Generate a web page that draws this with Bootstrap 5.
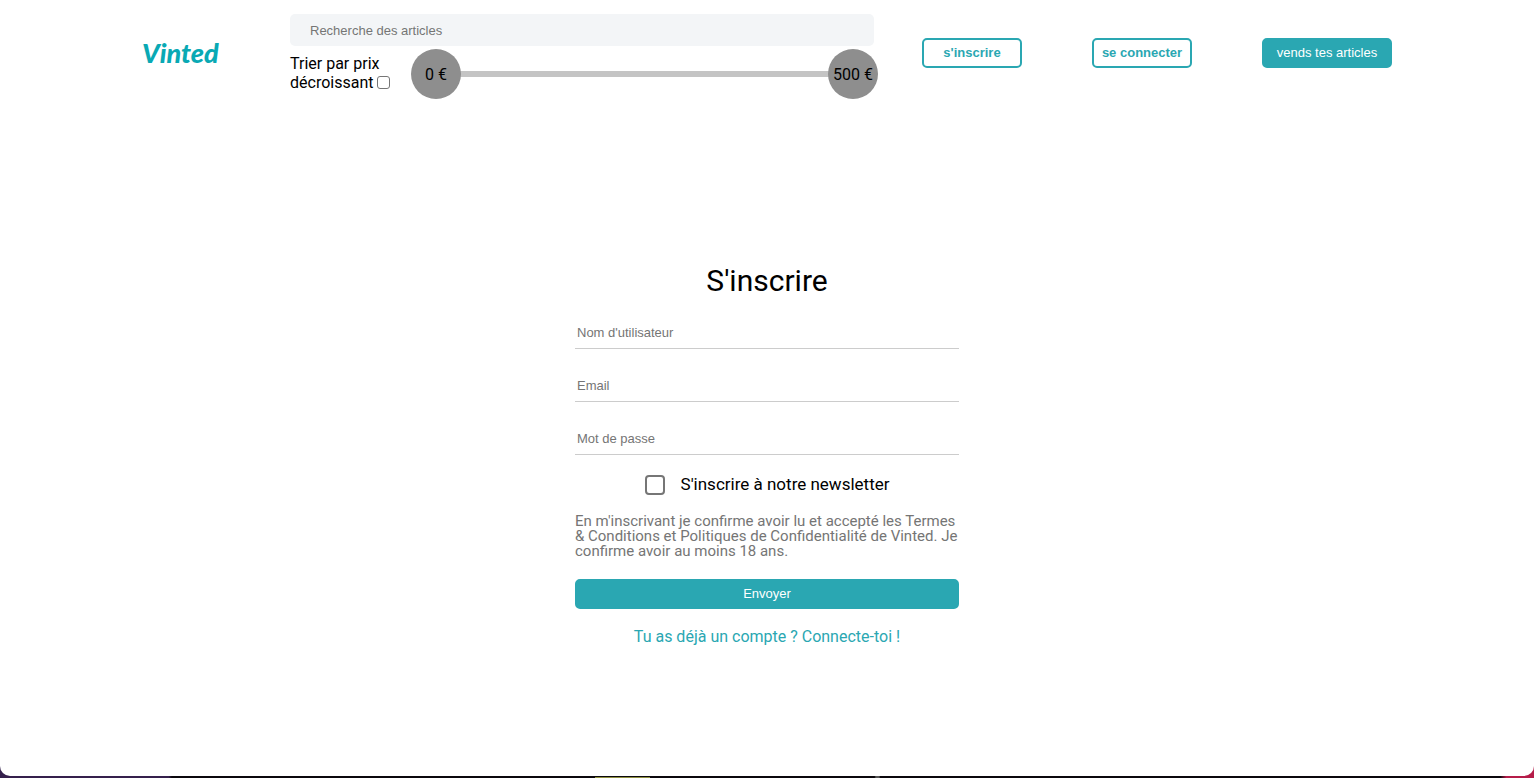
<!DOCTYPE html>
<html lang="fr">
<head>
<meta charset="utf-8">
<meta name="viewport" content="width=device-width, initial-scale=1">
<title>Vinted - S'inscrire</title>
<link href="https://cdn.jsdelivr.net/npm/bootstrap@5.3.0/dist/css/bootstrap.min.css" rel="stylesheet">
<style>
  :root { --teal: #2aa7b2; }
  html { min-height: 100vh; }
  body {
    font-family: Roboto, sans-serif; font-size: 16px; line-height: 19px; color: #000;
    background:
      linear-gradient(90deg, transparent 38.8%, #8f9040 38.8%, #8f9040 42.4%, transparent 42.4%) bottom / 100% 1px no-repeat,
      linear-gradient(90deg, #35204c 11%, #0b080d 11.2%, #0b080d 57%, #555 57.1%, #555 57.3%, #0b080d 57.4%, #0b080d 97.8%, #b51c49 98.2%);
  }
  .page { min-height: calc(100vh - 2px); background: #fff; border-radius: 0 0 10px 10px; }
  .topbar { max-width: 1250px; padding-top: 14px; }
  .brand { width: 78px; margin-right: 70px; font: italic 900 27px/30px Lato, sans-serif; color: #09a9b4; }
  .filters { margin-right: 48px; }
  .search { height: 32px; padding: 0 20px; border: 0; border-radius: 5px; background: #f3f5f7; }
  .search, .field, .action { font-family: "Liberation Sans", Arial, sans-serif; font-size: 13px; line-height: 16px; }
  .search::placeholder, .field::placeholder { color: #757575; opacity: 1; }
  .sort { width: 121px; }
  .sort input { width: 13px; height: 13px; vertical-align: -1px; }
  .tick { appearance: none; margin: 0; border: 1px solid #767676; border-radius: 3px; background: #fff; }
  .tick:checked { background: var(--teal); }
  .price { height: 50px; margin: -5px -4px -7px 0; }
  .price::before { content: ""; position: absolute; top: 22px; left: 25px; right: 25px; height: 6px; background: #c4c4c4; }
  .price input { position: absolute; inset: 0; width: 100%; height: 50px; margin: 0; appearance: none; background: none; pointer-events: none; }
  .price input::-webkit-slider-thumb { appearance: none; width: 50px; height: 50px; border-radius: 50%; background: #8e8e8e; pointer-events: auto; }
  .price output { position: relative; width: 50px; text-align: center; pointer-events: none; }
  .nav-actions { gap: 70px; }
  .action { width: 100px; height: 30px; padding: 0; border: 2px solid var(--teal); border-radius: 5px; color: var(--teal); background: #fff; }
  .action.solid { width: 130px; color: #fff; background: var(--teal); }
  .signup { max-width: 384px; gap: 20px; padding: 174px 0 40px; }
  .signup h1 { font-size: 30px; line-height: 30px; font-weight: 400; }
  .field { height: 33px; padding: 0 2px; border: 0; border-bottom: 1px solid #ccc; outline-offset: 2px; }
  .newsletter { height: 19px; gap: 16px; font-size: 17px; }
  .newsletter input { width: 20px; height: 20px; border-width: 2px; border-radius: 4px; }
  .terms { font-size: 15px; line-height: 15px; color: #757575; }
  .signup .action.solid { width: 100%; }
  .login { line-height: 16px; color: var(--teal); }
</style>
</head>
<body>
<div class="page">
  <header class="topbar container-fluid px-0 d-flex align-items-center">
    <a class="brand text-decoration-none flex-shrink-0" href="#">Vinted</a>
    <div class="filters flex-grow-1">
      <input class="search w-100 d-block" type="search" placeholder="Recherche des articles" aria-label="Recherche des articles">
      <div class="d-flex mt-2">
        <label class="sort flex-shrink-0">Trier par prix<br>décroissant <input class="tick" type="checkbox"></label>
        <div class="price position-relative flex-grow-1 d-flex justify-content-between align-items-center">
          <input id="min" type="range" min="0" max="500" value="0" aria-label="Prix minimum">
          <input id="max" type="range" min="0" max="500" value="500" aria-label="Prix maximum">
          <output for="min">0 €</output>
          <output for="max">500 €</output>
        </div>
      </div>
    </div>
    <nav class="nav-actions d-flex flex-shrink-0">
      <button class="action fw-bold" type="button">s'inscrire</button>
      <button class="action fw-bold" type="button">se connecter</button>
      <button class="action solid" type="button">vends tes articles</button>
    </nav>
  </header>
  <main>
    <form class="signup mx-auto d-flex flex-column">
      <h1 class="text-center mb-0">S'inscrire</h1>
      <input class="field w-100" type="text" placeholder="Nom d'utilisateur" aria-label="Nom d'utilisateur">
      <input class="field w-100" type="email" placeholder="Email" aria-label="Email">
      <input class="field w-100" type="password" placeholder="Mot de passe" aria-label="Mot de passe">
      <label class="newsletter d-flex justify-content-center align-items-center"><input class="tick flex-shrink-0" type="checkbox">S'inscrire à notre newsletter</label>
      <p class="terms mb-0">En m'inscrivant je confirme avoir lu et accepté les Termes &amp; Conditions et Politiques de Confidentialité de Vinted. Je confirme avoir au moins 18 ans.</p>
      <button class="action solid" type="submit">Envoyer</button>
      <a class="login text-center text-decoration-none" href="#">Tu as déjà un compte ? Connecte-toi !</a>
    </form>
  </main>
</div>
<script src="https://cdn.jsdelivr.net/npm/bootstrap@5.3.0/dist/js/bootstrap.bundle.min.js"></script>
</body>
</html>
